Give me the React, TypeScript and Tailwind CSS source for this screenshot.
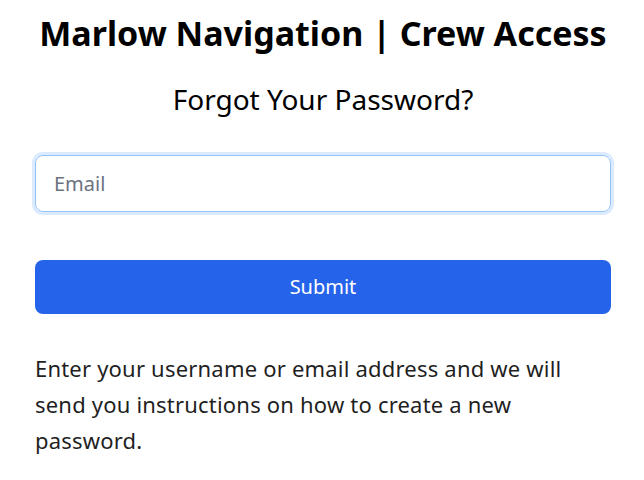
export default function App() {
  return (
    <div
      className="w-[644px] h-[480px] bg-white text-black overflow-hidden"
      style={{ fontFamily: '"Noto Sans", "Open Sans", sans-serif' }}
    >
      <div className="w-[576px] ml-[35px] flex flex-col">
        <h1 className="mt-[10px] text-center text-[34px] leading-[46px] font-bold whitespace-nowrap">
          Marlow Navigation | Crew Access
        </h1>
        <h2 className="mt-[25px] text-center text-[28px] leading-[36px]">
          Forgot Your Password?
        </h2>
        <input
          type="email"
          placeholder="Email"
          autoFocus
          className="mt-[38px] h-[57px] w-full rounded-lg border border-[#93c5fd] px-[18px] text-[20px] text-black placeholder:text-[#6b7280] outline-none ring-[3px] ring-[#dbeafe]"
        />
        <button className="mt-[48px] h-[54px] w-full rounded-lg bg-[#2563eb] text-white text-[20px]">
          Submit
        </button>
        <p className="mt-[36px] w-[540px] text-[22px] tracking-[0.2px] leading-[36px] text-[#1f1f1f]">
          Enter your username or email address and we will send you
          instructions on how to create a new password.
        </p>
      </div>
    </div>
  );
}
